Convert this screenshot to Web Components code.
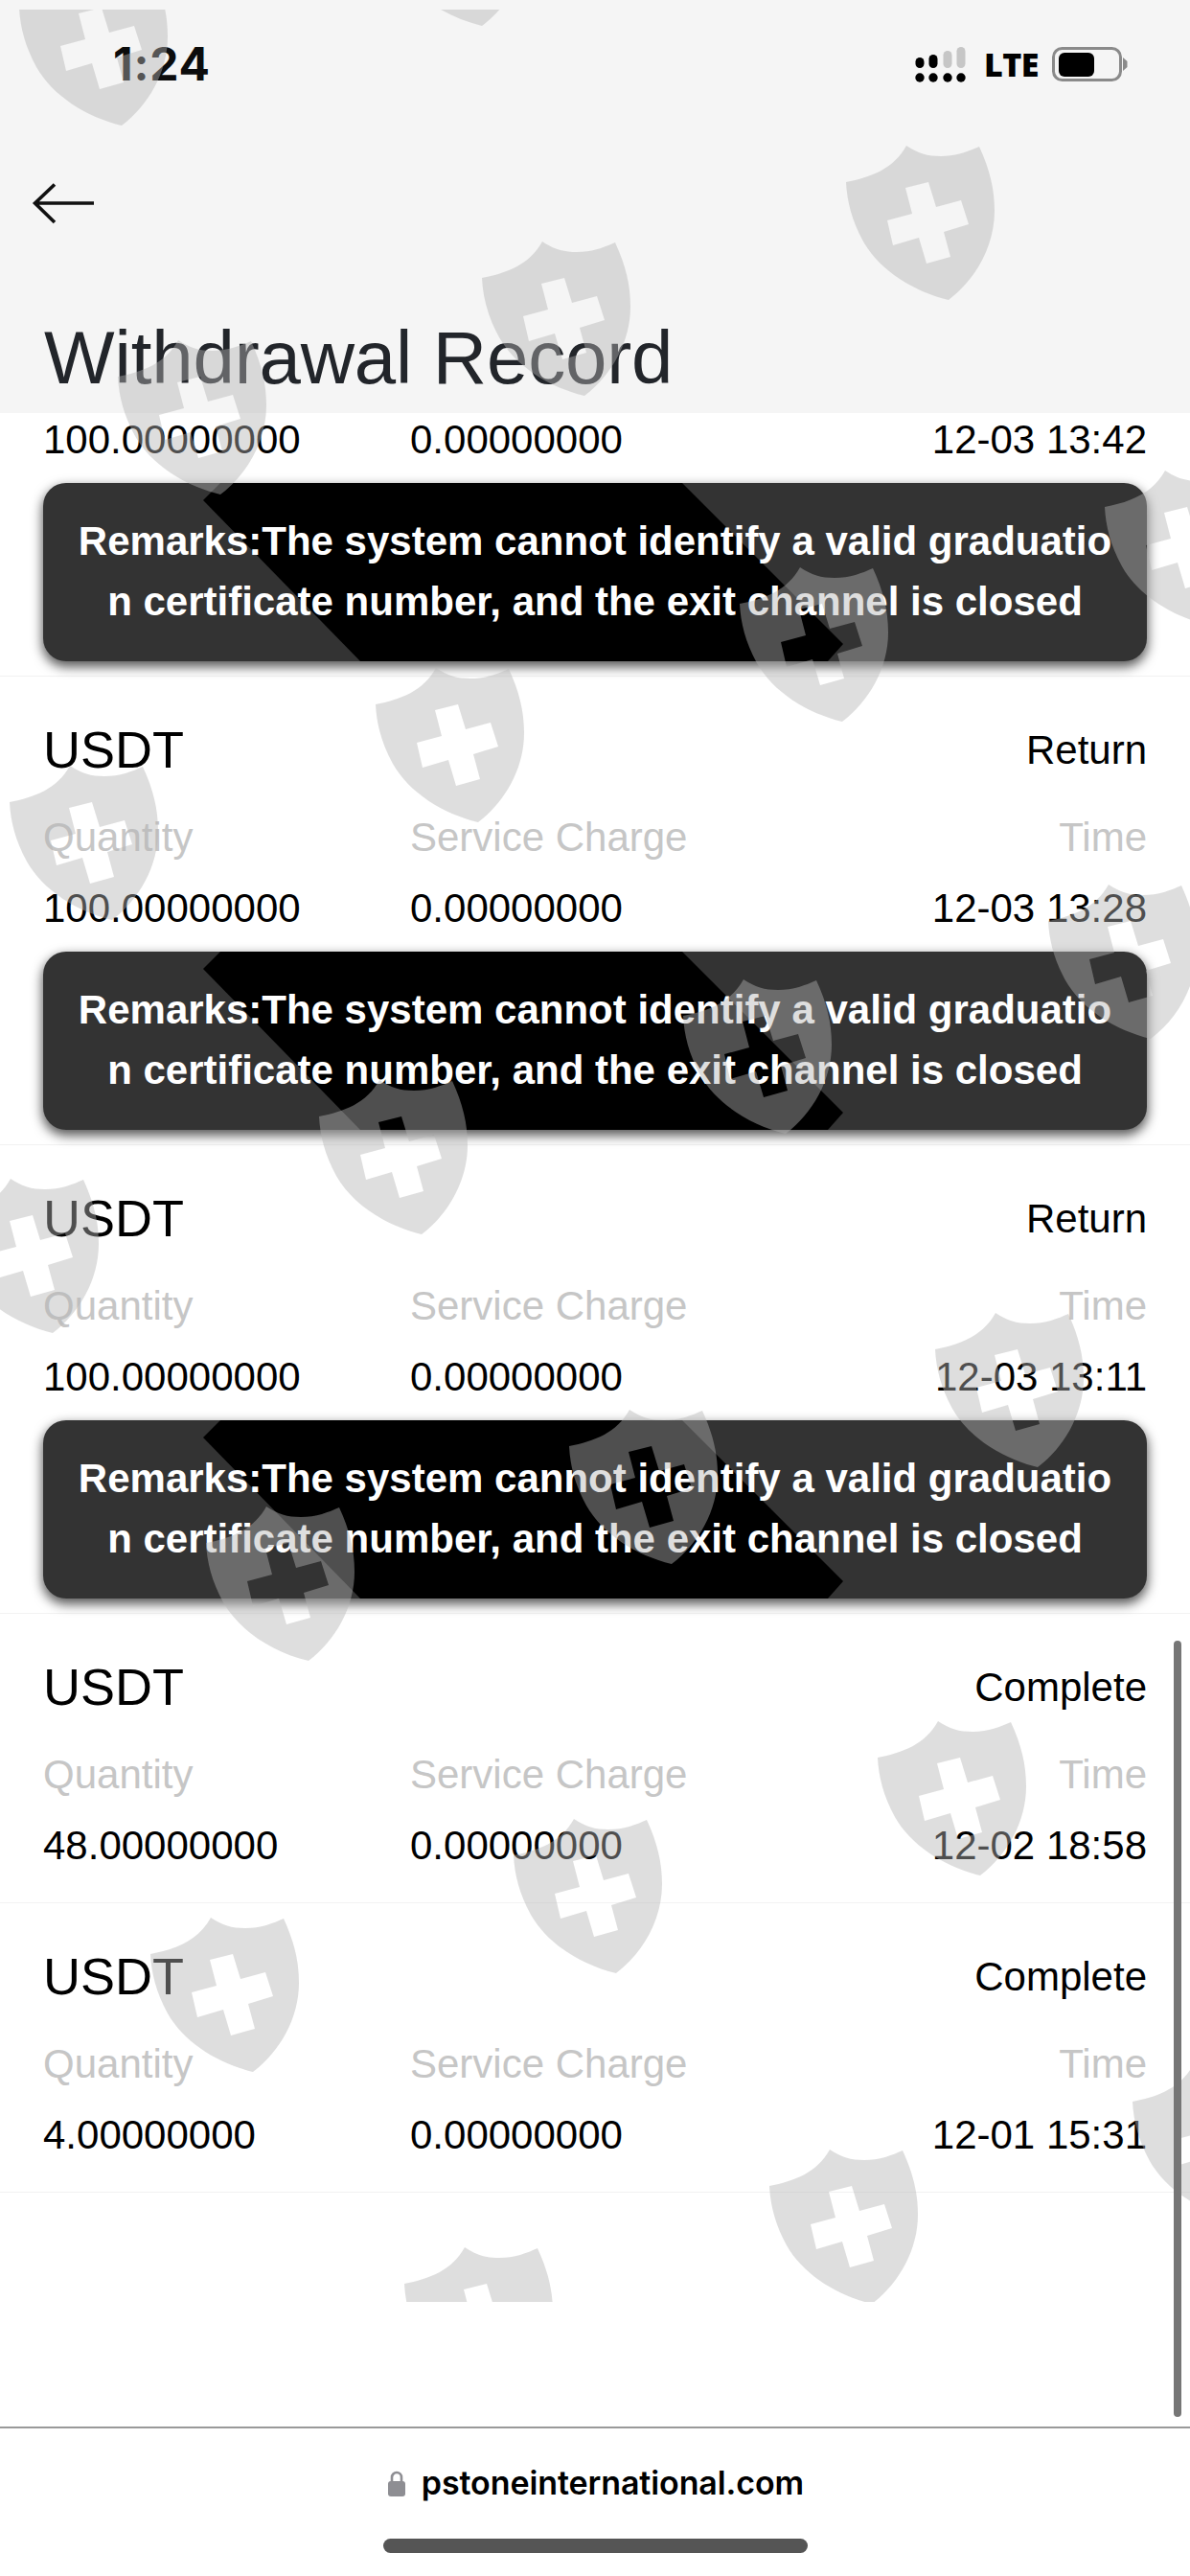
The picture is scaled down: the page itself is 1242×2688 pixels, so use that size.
<!DOCTYPE html>
<html lang="en">
<head>
<meta charset="utf-8">
<title>Withdrawal Record</title>
<style>
html,body{margin:0;padding:0;background:#fff}
body{font-family:"Liberation Sans",Arial,sans-serif;width:1242px;height:2688px;overflow:hidden}
</style>
</head>
<body>
<app-shell>
  <page-header slot="header" title="Withdrawal Record"></page-header>
  <record-row partial quantity="100.00000000" charge="0.00000000" time="12-03 13:42" remarks></record-row>
  <record-row status="Return" quantity="100.00000000" charge="0.00000000" time="12-03 13:28" remarks></record-row>
  <record-row status="Return" quantity="100.00000000" charge="0.00000000" time="12-03 13:11" remarks></record-row>
  <record-row status="Complete" quantity="48.00000000" charge="0.00000000" time="12-02 18:58"></record-row>
  <record-row status="Complete" quantity="4.00000000" charge="0.00000000" time="12-01 15:31"></record-row>
  <browser-bar slot="footer" url="pstoneinternational.com"></browser-bar>
</app-shell>
<script>
const def=(name,css,html)=>{
  customElements.define(name,class extends HTMLElement{
    connectedCallback(){
      if(this.shadowRoot)return;
      const r=this.attachShadow({mode:'open'});
      const a=n=>this.getAttribute(n)||'';
      r.innerHTML='<style>'+css+'</style>'+(typeof html==='function'?html(a,this):html);
    }
  });
};

def('status-bar',`
:host{display:flex;align-items:flex-start;justify-content:space-between;height:132px;box-sizing:border-box;padding:43px 64px 0 118px;color:#000}
.time{font:700 48px/48px Inter,"Liberation Sans",sans-serif;color:#0c0c0c;letter-spacing:.8px}
.right{display:flex;align-items:flex-start;margin-top:6px}
.lte{font:800 34px/36px "Open Sans",sans-serif;margin:0 15px 0 18px;width:56px;white-space:nowrap;letter-spacing:-.6px}
svg{display:block}
`,`<span class="time">1:24</span><div class="right">
<svg width="54" height="38" viewBox="0 0 54 38"><g fill="#000"><circle cx="5" cy="32" r="4.7"/><circle cx="19" cy="32" r="4.7"/><circle cx="34" cy="32" r="4.7"/><circle cx="48" cy="32" r="4.7"/><rect x=".5" y="11" width="9" height="11" rx="4.5"/><rect x="14.5" y="8" width="9" height="14" rx="4.5"/></g><g fill="#c6c6c6"><rect x="29.5" y="4" width="9" height="18" rx="4.5"/><rect x="43.5" y="0" width="9" height="22" rx="4.5"/></g></svg>
<span class="lte">LTE</span>
<svg width="80" height="38" viewBox="0 0 80 38"><rect x="1.5" y="1.5" width="70" height="33" rx="9" fill="none" stroke="#8a8a8a" stroke-width="3"/><rect x="7" y="6" width="37" height="25" rx="6" fill="#000"/><path d="M74 11l4.500 4v6l-4.500 4z" fill="#8a8a8a"/></svg>
</div>`);

def('page-header',`
:host{display:flex;flex-direction:column;background:#f5f5f5;height:431px;box-sizing:border-box}
.back{display:block;margin:58px 0 0 33px}
h1{margin:94px 0 0 46px;font:400 78px/90px "Liberation Sans",sans-serif;color:#22252a;letter-spacing:-.15px}
`,a=>`<status-bar></status-bar>
<svg class="back" width="66" height="44" viewBox="0 0 66 44" fill="none" stroke="#111" stroke-width="3.6"><path d="M65 22H4M24 2.500 3.500 22 24 42"/></svg>
<h1>${a('title')}</h1>`);

def('remark-box',`
:host{display:block;position:relative;height:186px;box-sizing:border-box;margin:20px 45px 0;padding:29px 30px;background:#333;border-radius:24px;box-shadow:0 5px 12px 1px rgba(0,0,0,.65);color:#fff;text-align:center;font:700 42px/63px "Liberation Sans",sans-serif}
.band{position:absolute;inset:0;background:#000;clip-path:polygon(185px 0,167px 18px,331px 186px,819px 186px,835px 168px,667px 0)}
.text{position:relative;white-space:nowrap}
`,`<div class="band"></div><div class="text">Remarks:The system cannot identify a valid graduatio<br>n certificate number, and the exit channel is closed</div>`);

def('record-row',`
:host{display:block;border-bottom:1px solid #f2f2f2;box-sizing:border-box;padding-top:46px;padding-bottom:34px;color:#000}
:host([partial]){padding-top:3px}
:host([remarks]){padding-bottom:15px}
.head{display:flex;justify-content:space-between;align-items:center;height:60px;padding:0 45px;margin-bottom:37px}
.coin{font-size:54px;line-height:60px}
.status{font-size:42px;position:relative;top:1px}
.cols{display:grid;grid-template-columns:383px 1fr auto;padding:0 45px;font-size:42px;line-height:50px}
.labels{color:#c6c6c6;margin-bottom:24px}
.end{text-align:right}
`,(a,el)=>`${el.hasAttribute('partial')?'':`<div class="head"><span class="coin">USDT</span><span class="status">${a('status')}</span></div>
<div class="cols labels"><span>Quantity</span><span>Service Charge</span><span class="end">Time</span></div>`}
<div class="cols"><span>${a('quantity')}</span><span>${a('charge')}</span><span class="end">${a('time')}</span></div>
${el.hasAttribute('remarks')?'<remark-box></remark-box>':''}`);

def('browser-bar',`
:host{display:flex;flex-direction:column;align-items:center;height:156px;box-sizing:border-box;background:#fff;border-top:2px solid #9a9a9a}
.url{display:flex;align-items:center;gap:17px;margin-top:37px;height:40px;font:600 34px/40px Inter,"Liberation Sans",sans-serif;color:#000;margin-left:2px}
.url span{display:inline-block;letter-spacing:-.1px}
.home{width:443px;height:15px;border-radius:8px;background:#555;margin-top:38px}
`,a=>`<div class="url"><svg width="18" height="27" viewBox="0 0 18 27"><path d="M4 12V7a5 5 0 0 1 10 0v5" fill="none" stroke="#8e8e93" stroke-width="2.600"/><rect x="0" y="11" width="18" height="16" rx="3" fill="#8e8e93"/></svg><span>${a('url')}</span></div><div class="home"></div>`);

const SHIELDS=[[20,-30],[396,-134],[883,152],[503,252],[123,355],[1153,491],[772,592],[392,697],[10,799],[1094,923],[713,1022],[333,1127],[-52,1230],[976,1370],[594,1471],[215,1572],[916,1796],[536,1898],[157,2001],[1182,2155],[803,2243],[422,2345]];
const SHIELD_D="M0 38C26 33 50 24 63 0C75 8 85 11 99 11C115 11 128 6 139 1C150 25 155 45 155 68C155 105 135 140 107 161C70 152 35 130 18 100C6 78 1 58 0 38ZM62 44L86 38L94 64L120 57L128 82L102 90L109 116L84 123L76 96L49 104L43 78L69 71Z";
def('shield-watermark',`
:host{display:block;position:absolute;left:0;top:10px;width:1242px;height:2392px;overflow:hidden;pointer-events:none}
svg{display:block}
`,`<svg width="1242" height="2392" viewBox="0 10 1242 2392" fill="rgba(180,180,180,.44)" fill-rule="evenodd" aria-hidden="true">${SHIELDS.map(([x,y])=>`<path transform="translate(${x} ${y})" d="${SHIELD_D}"/>`).join('')}</svg>`);

def('app-shell',`
:host{display:flex;flex-direction:column;position:relative;width:1242px;height:2688px;overflow:hidden;background:#fff}
.list{flex:1;min-height:0;overflow:hidden}
.scroll{position:absolute;left:1225px;top:1712px;width:8px;height:810px;border-radius:4px;background:#767676}
`,`<slot name="header"></slot><div class="list"><slot></slot></div><slot name="footer"></slot><shield-watermark></shield-watermark><div class="scroll"></div>`);
</script>
</body>
</html>
